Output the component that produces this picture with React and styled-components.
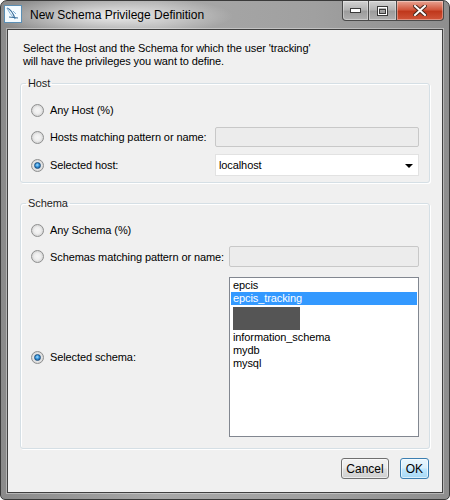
import { Fragment } from "react";
import styled, { createGlobalStyle } from "styled-components";

const GlobalStyle = createGlobalStyle`
  html, body {
    margin: 0;
    padding: 0;
    background: #ffffff;
  }
  body {
    font-family: "Liberation Sans", Arial, sans-serif;
    font-size: 11px;
    letter-spacing: -0.1px;
    color: #000;
  }
`;

const Window = styled.div`
  width: 450px;
  height: 500px;
  box-sizing: border-box;
  display: flex;
  flex-direction: column;
  border: 1px solid #3a3a3a;
  border-radius: 7px 7px 5px 5px;
  padding: 0 6px 6px;
  background:
    radial-gradient(ellipse 120px 20px at 112px 15px, rgba(255, 255, 255, 0.8), rgba(255, 255, 255, 0) 100%),
    linear-gradient(to right, #8a8a8a, #a8a8a8 35%, #a0a0a0 70%, #8e8e8e);
  overflow: hidden;
`;

const TitleBar = styled.div`
  height: 28px;
  display: flex;
  align-items: flex-start;
  flex: none;
`;

const AppIcon = styled.svg`
  margin: 4px 0 0 -3px;
  flex: none;
`;

const Title = styled.div`
  align-self: center;
  margin-left: 8px;
  font-size: 12px;
  letter-spacing: 0;
  color: #000;
`;

const Controls = styled.div`
  margin-left: auto;
  margin-right: -1px;
  display: flex;
  height: 20px;
`;

const CtrlButton = styled.div`
  width: ${(p) => p.$w}px;
  height: 20px;
  box-sizing: border-box;
  display: flex;
  align-items: center;
  justify-content: center;
  border: 1px solid #4a4a4a;
  border-top: none;
  border-left: ${(p) => (p.$first ? "1px solid #4a4a4a" : "none")};
  border-radius: ${(p) => p.$radius};
  background: ${(p) =>
    p.$close
      ? "linear-gradient(#e8a493 0%, #d2583e 45%, #c0381c 55%, #d0553a 100%)"
      : "linear-gradient(#d3d3d3 0%, #b4b4b4 45%, #9c9c9c 55%, #b0b0b0 100%)"};
  box-shadow: inset 0 0 0 1px rgba(255, 255, 255, 0.35);
`;

const Client = styled.div`
  flex: 1;
  display: flex;
  flex-direction: column;
  background: #f0f0f0;
  border: 1px solid #404040;
  box-shadow: 0 0 0 1px rgba(255, 255, 255, 0.35);
`;

const Intro = styled.p`
  margin: 12px 15px 0;
  line-height: 13px;
`;

const Group = styled.fieldset`
  margin: ${(p) => p.$mt}px 12px 0;
  padding: ${(p) => p.$pt}px 10px ${(p) => p.$pb}px;
  border: 1px solid #d5dfe5;
  border-radius: 3px;
  box-shadow: inset 1px 1px 0 #ffffff, 1px 1px 0 #ffffff;
  min-width: 0;
`;

const Legend = styled.legend`
  padding: 0 2px;
  margin-left: -5px;
  line-height: 14px;
  color: #1e1e1e;
`;

const Rows = styled.div`
  display: grid;
  grid-template-columns: ${(p) => p.$label}px 1fr;
`;

const Option = styled.label`
  display: flex;
  align-items: center;
  gap: 6px;
  height: ${(p) => p.$h}px;
  margin-top: ${(p) => p.$mt || 0}px;
  align-self: center;
`;

const Radio = styled.span`
  width: 13px;
  height: 13px;
  box-sizing: border-box;
  border-radius: 50%;
  border: 1px solid #8e8f8f;
  background: radial-gradient(circle at 50% 50%, #f6f6f6 0, #eeeeee 40%, #d4d4d4 75%, #ececec 100%);
  display: flex;
  align-items: center;
  justify-content: center;
  flex: none;

  &::after {
    content: "";
    display: ${(p) => (p.$checked ? "block" : "none")};
    width: 7px;
    height: 7px;
    box-sizing: border-box;
    border-radius: 50%;
    border: 1px solid #1d4f7e;
    background: radial-gradient(circle at 45% 40%, #a8e0ff 0, #3594dc 45%, #104a86 100%);
  }
`;

const TextField = styled.div`
  height: ${(p) => p.$h}px;
  margin-top: ${(p) => p.$mt || 0}px;
  box-sizing: border-box;
  border: 1px solid #c8c8c8;
  border-radius: 2px;
  background: #ececec;
`;

const Select = styled.div`
  height: 22px;
  margin-top: 7px;
  box-sizing: border-box;
  border: 1px solid #e2e2e2;
  background: #ffffff;
  display: flex;
  align-items: center;
  justify-content: space-between;
  padding: 0 5px 0 3px;
`;

const Arrow = styled.span`
  width: 0;
  height: 0;
  border-left: 4px solid transparent;
  border-right: 4px solid transparent;
  border-top: 4px solid #000;
  margin-top: 1px;
`;

const List = styled.div`
  height: 160px;
  margin-top: 10px;
  box-sizing: border-box;
  border: 1px solid #828790;
  background: #ffffff;
  padding: 1px;
`;

const Item = styled.div`
  height: 13px;
  line-height: 13px;
  padding-left: 2px;
  background: ${(p) => (p.$selected ? "#3399ff" : "transparent")};
  color: ${(p) => (p.$selected ? "#ffffff" : "#000")};
  white-space: nowrap;
`;

const Redacted = styled.div`
  width: 67px;
  height: 23px;
  margin: 2px 0 1px 2px;
  background: #555555;
`;

const Footer = styled.div`
  margin-top: auto;
  display: flex;
  justify-content: flex-end;
  gap: 11px;
  padding: 0 13px 13px;
`;

const Button = styled.div`
  height: 21px;
  box-sizing: border-box;
  padding: 0 ${(p) => p.$px}px;
  display: flex;
  align-items: center;
  border-radius: 3px;
  font-size: 12px;
  letter-spacing: 0;
  border: 1px solid ${(p) => (p.$default ? "#3c7fb1" : "#707070")};
  background: ${(p) =>
    p.$default
      ? "linear-gradient(#eaf6fd 0%, #d9f0fc 45%, #bee6fd 55%, #a7d9f5 100%)"
      : "linear-gradient(#f2f2f2 0%, #ebebeb 45%, #dddddd 55%, #cfcfcf 100%)"};
  box-shadow: inset 0 0 0 1px rgba(255, 255, 255, 0.6);
`;

const hostOptions = [
  { label: "Any Host (%)", h: 20 },
  { label: "Hosts matching pattern or name:", h: 20, field: "text" },
  { label: "Selected host:", h: 22, field: "select", checked: true },
];

const schemas = ["epcis", "epcis_tracking", null, "information_schema", "mydb", "mysql"];

const WorkbenchIcon = () => (
  <AppIcon width="18" height="18" viewBox="0 0 18 18">
    <rect x="0.5" y="0.5" width="17" height="17" fill="#f4fbff" stroke="#5b8fb5" />
    <path d="M3 3 C6 4 9 7 11 14" stroke="#3a6f9c" strokeWidth="1.2" fill="none" />
    <path d="M3 3 C5 7 7 10 11 14" stroke="#7fb0d6" strokeWidth="1" fill="none" />
    <path d="M5 12 L14 13" stroke="#3a6f9c" strokeWidth="1" />
    <path d="M9 6 L12 9" stroke="#7fb0d6" strokeWidth="1" />
  </AppIcon>
);

const App = () => {
  return (
    <>
      <GlobalStyle />
      <Window>
        <TitleBar>
          <WorkbenchIcon />
          <Title>New Schema Privilege Definition</Title>
          <Controls>
            <CtrlButton $w={27} $first $radius="0 0 0 4px">
              <svg width="11" height="5" viewBox="0 0 11 5">
                <rect x="0.5" y="0.5" width="10" height="4" fill="#fff" stroke="#3a3a3a" />
              </svg>
            </CtrlButton>
            <CtrlButton $w={28} $radius="0">
              <svg width="11" height="10" viewBox="0 0 11 10">
                <rect x="0.5" y="0.5" width="10" height="9" fill="none" stroke="#3a3a3a" />
                <rect x="1.5" y="1.5" width="8" height="7" fill="none" stroke="#fff" />
                <rect x="2.5" y="3.5" width="6" height="4" fill="none" stroke="#3a3a3a" />
              </svg>
            </CtrlButton>
            <CtrlButton $w={47} $close $radius="0 0 4px 0">
              <svg width="14" height="11" viewBox="0 0 14 11">
                <path d="M2 1 L12 10 M12 1 L2 10" stroke="#4a2a20" strokeWidth="4" strokeLinecap="square" />
                <path d="M2 1 L12 10 M12 1 L2 10" stroke="#ffffff" strokeWidth="2" strokeLinecap="square" />
              </svg>
            </CtrlButton>
          </Controls>
        </TitleBar>

        <Client>
          <Intro>
            Select the Host and the Schema for which the user 'tracking'
            <br />
            will have the privileges you want to define.
          </Intro>

          <Group $mt={8} $pt={10} $pb={6}>
            <Legend>Host</Legend>
            <Rows $label={184}>
              {hostOptions.map((o, i) => (
                <Fragment key={o.label}>
                  <Option $h={o.h} $mt={i ? 7 : 0}>
                    <Radio $checked={o.checked} />
                    {o.label}
                  </Option>
                  {o.field === "text" && <TextField $h={20} $mt={7} />}
                  {o.field === "select" && (
                    <Select>
                      localhost
                      <Arrow />
                    </Select>
                  )}
                  {!o.field && <div />}
                </Fragment>
              ))}
            </Rows>
          </Group>

          <Group $mt={13} $pt={10} $pb={11}>
            <Legend>Schema</Legend>
            <Rows $label={198}>
              <Option $h={20}>
                <Radio />
                Any Schema (%)
              </Option>
              <div />
              <Option $h={20} $mt={6}>
                <Radio />
                Schemas matching pattern or name:
              </Option>
              <TextField $h={21} $mt={6} />
              <Option $h={20} $mt={10}>
                <Radio $checked />
                Selected schema:
              </Option>
              <List>
                {schemas.map((s, i) =>
                  s ? (
                    <Item key={s} $selected={s === "epcis_tracking"}>
                      {s}
                    </Item>
                  ) : (
                    <Redacted key={"r" + i} />
                  )
                )}
              </List>
            </Rows>
          </Group>

          <Footer>
            <Button $px={4}>Cancel</Button>
            <Button $px={5} $default>
              OK
            </Button>
          </Footer>
        </Client>
      </Window>
    </>
  );
};

export default App;
